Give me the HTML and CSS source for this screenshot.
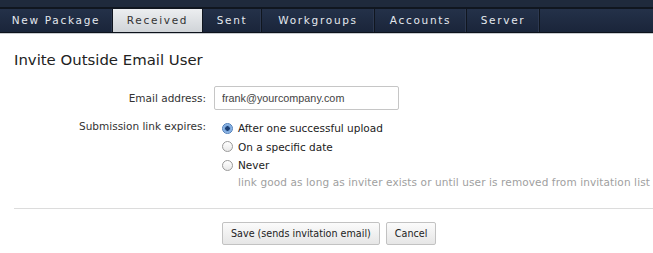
FILE: index.html
```html
<!DOCTYPE html>
<html lang="en">
<head>
    <meta charset="UTF-8">
    <title>Invite Outside Email User</title>
    <link rel="stylesheet" href="styles.css">
</head>
<body>
    <div class="topbar"></div>
    <ul class="tabs">
        <li class="tab tab-new">New Package</li>
        <li class="tab tab-received active">Received</li>
        <li class="tab tab-sent">Sent</li>
        <li class="tab tab-groups">Workgroups</li>
        <li class="tab tab-accounts">Accounts</li>
        <li class="tab tab-server">Server</li>
    </ul>

    <div class="content">
        <h1>Invite Outside Email User</h1>

        <form class="invite-form">
            <div class="row">
                <label class="label" for="email">Email address:</label>
                <div class="field">
                    <input type="text" id="email" class="text-input" value="frank@yourcompany.com">
                </div>
            </div>

            <div class="row row-expires">
                <div class="label">Submission link expires:</div>
                <div class="field options">
                    <label class="option"><span class="radio checked"></span>After one successful upload</label>
                    <label class="option"><span class="radio"></span>On a specific date</label>
                    <label class="option"><span class="radio"></span>Never</label>
                    <div class="hint">link good as long as inviter exists or until user is removed from invitation list</div>
                </div>
            </div>

            <hr class="divider">

            <div class="actions">
                <button type="button" class="btn">Save (sends invitation email)</button>
                <button type="button" class="btn">Cancel</button>
            </div>
        </form>
    </div>
</body>
</html>
```

FILE: styles.css
```css
body {
    margin: 0;
    background: #fff;
    font-family: 'DejaVu Sans', Verdana, sans-serif;
    color: #222;
}

.topbar {
    height: 7px;
    background: #1f2a3c;
    border-bottom: 2px solid #10161f;
}

.tabs {
    display: flex;
    margin: 0;
    padding: 0;
    list-style: none;
    height: 23px;
    background: linear-gradient(#243149, #1a253a);
    border-bottom: 1px solid #0d121b;
    box-shadow: 0 1px 0 #c9ccd0;
}

.tab {
    box-sizing: border-box;
    height: 23px;
    line-height: 22px;
    text-align: center;
    font-size: 10.5px;
    letter-spacing: 1.7px;
    color: #e4e8ee;
    border-right: 1px solid #10161f;
    box-shadow: inset -1px 0 0 #2c3850;
}

.tab-new { width: 113px; }
.tab-received { width: 90px; }
.tab-sent { width: 59px; }
.tab-groups { width: 113px; }
.tab-accounts { width: 92px; }
.tab-server { width: 73px; }

.tab.active {
    background: linear-gradient(#eceef0, #d0d4d8);
    color: #333;
    box-shadow: none;
}

.content {
    padding: 0 14px;
}

h1 {
    margin: 18px 0 0;
    font-size: 14.9px;
    font-weight: normal;
    color: #222;
}

.invite-form {
    margin-top: 17px;
}

.row {
    display: flex;
    font-size: 10.5px;
}

.label {
    width: 192px;
    flex-shrink: 0;
    text-align: right;
    color: #333;
}

.row:first-child .label {
    padding-top: 6px;
}

.field {
    margin-left: 8px;
}

.text-input {
    box-sizing: border-box;
    width: 185px;
    height: 24px;
    padding: 2px 7px;
    border: 1px solid #c6c6c6;
    border-radius: 2px;
    font-family: 'Liberation Sans', Arial, sans-serif;
    font-size: 10.8px;
    color: #444;
}

.row-expires {
    margin-top: 9px;
}

.row-expires .label {
    padding-top: 1px;
}

.options {
    margin-left: 16px;
}

.option {
    display: flex;
    align-items: center;
    height: 18.5px;
    color: #222;
}

.radio {
    box-sizing: border-box;
    width: 11px;
    height: 11px;
    margin-right: 5px;
    border: 1px solid #9a9a9a;
    border-radius: 50%;
    background: linear-gradient(#fff, #e8e8e8);
}

.radio.checked {
    border-color: #4a7bb8;
    background: radial-gradient(circle, #1d3f73 0, #1d3f73 2px, #6f9fd8 2.5px, #a9c9ee 5px);
}

.hint {
    margin-top: 1px;
    padding-left: 16px;
    color: #a0a0a0;
    letter-spacing: 0.11px;
    white-space: nowrap;
}

.divider {
    margin: 20px -14px 0 0;
    border: 0;
    border-top: 1px solid #dcdcdc;
}

.actions {
    display: flex;
    gap: 6px;
    margin: 13px 0 0 208px;
}

.btn {
    height: 23px;
    padding: 0 8px;
    border: 1px solid #c2c2c2;
    border-radius: 2px;
    background: linear-gradient(#fbfbfb, #e6e6e6);
    font-family: 'DejaVu Sans', Verdana, sans-serif;
    font-size: 9.6px;
    color: #222;
}
```
